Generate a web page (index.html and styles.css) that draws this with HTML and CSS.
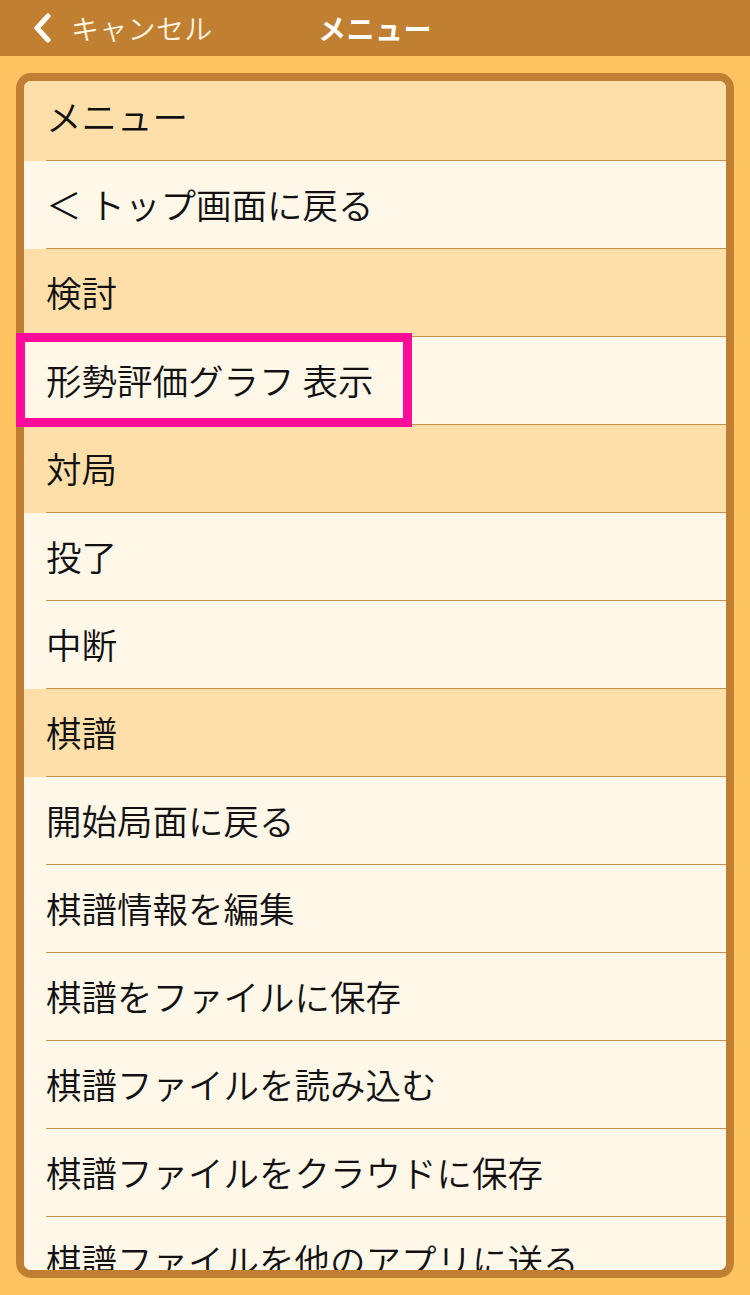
FILE: index.html
```html
<!DOCTYPE html>
<html lang="ja">
<head>
<meta charset="utf-8">
<link rel="stylesheet" href="styles.css">
</head>
<body>
<div class="page">
  <header class="navbar">
    <div class="nav-left">
      <svg class="chev" width="20" height="30" viewBox="0 0 20 30"><polyline points="15,3 4,15 15,27" fill="none" stroke="#ffffff" stroke-width="5" stroke-linecap="round" stroke-linejoin="round"/></svg>
      <span class="cancel">キャンセル</span>
    </div>
    <div class="nav-title">メニュー</div>
    <div class="nav-right"></div>
  </header>
  <main class="content">
    <div class="panel">
      <ul class="list">
        <li class="row section">メニュー</li>
        <li class="row">＜ トップ画面に戻る</li>
        <li class="row section">検討</li>
        <li class="row">形勢評価グラフ 表示</li>
        <li class="row section">対局</li>
        <li class="row">投了</li>
        <li class="row">中断</li>
        <li class="row section">棋譜</li>
        <li class="row">開始局面に戻る</li>
        <li class="row">棋譜情報を編集</li>
        <li class="row">棋譜をファイルに保存</li>
        <li class="row">棋譜ファイルを読み込む</li>
        <li class="row">棋譜ファイルをクラウドに保存</li>
        <li class="row">棋譜ファイルを他のアプリに送る</li>
      </ul>
    </div>
  </main>
  <div class="highlight"></div>
</div>
</body>
</html>
```

FILE: styles.css
```css
html, body {
  margin: 0;
  padding: 0;
}
body {
  background: #FFC462;
  font-family: "Noto Sans CJK JP", "Noto Sans", sans-serif;
}
.page {
  position: relative;
  width: 750px;
  height: 1295px;
  overflow: hidden;
  background: #FFC462;
}
.navbar {
  height: 56px;
  background: #C17F31;
  display: grid;
  grid-template-columns: 1fr auto 1fr;
  align-items: center;
  color: #ffffff;
}
.nav-left {
  display: flex;
  align-items: center;
  padding-left: 33px;
  gap: 18px;
}
.chev {
  display: block;
}
.cancel {
  font-size: 28px;
  font-weight: 350;
  line-height: 1;
  color: #FFF3E2;
  letter-spacing: 0.3px;
}
.nav-title {
  font-size: 28px;
  font-weight: 700;
  line-height: 1;
  letter-spacing: 0.5px;
}
.content {
  padding: 17px 16px 0 16px;
}
.panel {
  box-sizing: border-box;
  height: 1205px;
  border: 8px solid #C07F33;
  border-radius: 15px;
  overflow: hidden;
  background: #FFF7E8;
}
.list {
  list-style: none;
  margin: -8px 0 0 0;
  padding: 0;
}
.row {
  position: relative;
  box-sizing: border-box;
  height: 88px;
  display: flex;
  align-items: center;
  padding-left: 22px;
  padding-bottom: 4px;
  font-size: 35.5px;
  font-weight: 350;
  color: #111111;
  background: #FFF7E8;
  white-space: nowrap;
}
.row.section {
  background: #FFDFA9;
}
.row::after {
  content: "";
  position: absolute;
  left: 22px;
  right: 0;
  bottom: 0;
  height: 1px;
  background: #C4914A;
}
.highlight {
  position: absolute;
  left: 16px;
  top: 333px;
  width: 396px;
  height: 94px;
  box-sizing: border-box;
  border: 9px solid #FF0A99;
}
```
